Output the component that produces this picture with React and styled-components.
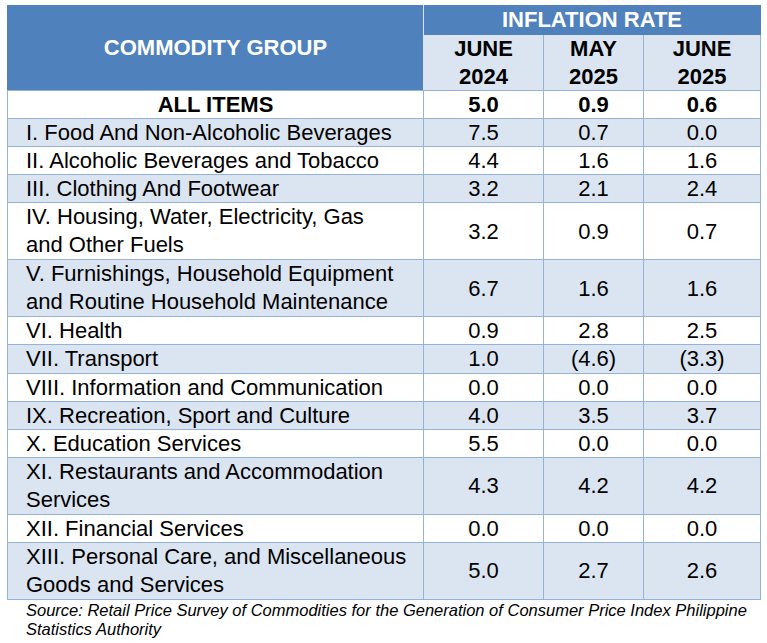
import styled, { createGlobalStyle } from "styled-components";

const GlobalStyle = createGlobalStyle`
  body {
    margin: 0;
    background: #ffffff;
    font-family: "Liberation Sans", Arial, sans-serif;
  }
`;

const rows = [
  { name: ["I. Food And Non-Alcoholic Beverages"], v: ["7.5", "0.7", "0.0"] },
  { name: ["II. Alcoholic Beverages and Tobacco"], v: ["4.4", "1.6", "1.6"] },
  { name: ["III. Clothing And Footwear"], v: ["3.2", "2.1", "2.4"] },
  { name: ["IV. Housing, Water, Electricity, Gas", "and Other Fuels"], v: ["3.2", "0.9", "0.7"] },
  { name: ["V. Furnishings, Household Equipment", "and Routine Household Maintenance"], v: ["6.7", "1.6", "1.6"] },
  { name: ["VI. Health"], v: ["0.9", "2.8", "2.5"] },
  { name: ["VII. Transport"], v: ["1.0", "(4.6)", "(3.3)"] },
  { name: ["VIII. Information and Communication"], v: ["0.0", "0.0", "0.0"] },
  { name: ["IX. Recreation, Sport and Culture"], v: ["4.0", "3.5", "3.7"] },
  { name: ["X. Education Services"], v: ["5.5", "0.0", "0.0"] },
  { name: ["XI. Restaurants and Accommodation", "Services"], v: ["4.3", "4.2", "4.2"] },
  { name: ["XII. Financial Services"], v: ["0.0", "0.0", "0.0"] },
  { name: ["XIII. Personal Care, and Miscellaneous", "Goods and Services"], v: ["5.0", "2.7", "2.6"] },
];

const App = () => (
  <Page>
    <GlobalStyle />
    <Table>
      <colgroup>
        <col style={{ width: 416 }} />
        <col style={{ width: 120 }} />
        <col style={{ width: 100 }} />
        <col style={{ width: 117 }} />
      </colgroup>
      <thead>
        <tr>
          <GroupHead rowSpan={2}>COMMODITY GROUP</GroupHead>
          <RateHead colSpan={3}>INFLATION RATE</RateHead>
        </tr>
        <tr>
          <PeriodHead>JUNE<br />2024</PeriodHead>
          <PeriodHead>MAY<br />2025</PeriodHead>
          <PeriodHead>JUNE<br />2025</PeriodHead>
        </tr>
      </thead>
      <tbody>
        <Row>
          <AllCell>ALL ITEMS</AllCell>
          <AllCell>5.0</AllCell>
          <AllCell>0.9</AllCell>
          <AllCell>0.6</AllCell>
        </Row>
        {rows.map((r, i) => (
          <Row key={r.name[0]} $shaded={i % 2 === 0}>
            <NameCell $double={r.name.length > 1}>
              {r.name.map((line) => (
                <div key={line}>{line}</div>
              ))}
            </NameCell>
            {r.v.map((val, j) => (
              <ValueCell key={j}>{val}</ValueCell>
            ))}
          </Row>
        ))}
      </tbody>
    </Table>
    <Source>
      Source: Retail Price Survey of Commodities for the Generation of Consumer Price Index Philippine
      <br />
      Statistics Authority
    </Source>
  </Page>
);

export default App;

const Page = styled.div`
  padding: 5px 7px 0 7px;
  width: 753px;
`;

const Table = styled.table`
  border-collapse: collapse;
  table-layout: fixed;
  width: 753px;
  font-size: 22px;
  color: #000;
`;

const HeadCell = styled.th`
  padding: 0;
  font-weight: bold;
  font-size: 22px;
  text-align: center;
  border: 1px solid #ffffff;
`;

const GroupHead = styled(HeadCell)`
  background: #4f81bd;
  color: #ffffff;
  border-color: #4f81bd #dbe5f1 #95b3d7 #4f81bd;
`;

const RateHead = styled(HeadCell)`
  background: #4f81bd;
  color: #ffffff;
  height: 28px;
  line-height: 28px;
  border-color: #4f81bd #4f81bd #4f81bd #dbe5f1;
`;

const PeriodHead = styled(HeadCell)`
  background: #dbe5f1;
  color: #000;
  line-height: 27.5px;
  height: 55px;
  border-color: #95b3d7;
  border-top-color: #4f81bd;
`;

const Row = styled.tr`
  background: ${(p) => (p.$shaded ? "#dbe5f1" : "#ffffff")};
`;

const Cell = styled.td`
  border: 1px solid #95b3d7;
  padding: 0;
  line-height: 27.1px;
  height: 27.1px;
  white-space: nowrap;
`;

const NameCell = styled(Cell)`
  padding-left: 18px;
  text-align: left;
  line-height: ${(p) => (p.$double ? "28px" : "27.1px")};
`;

const ValueCell = styled(Cell)`
  text-align: center;
`;

const AllCell = styled(Cell)`
  font-weight: bold;
  text-align: center;
`;

const Source = styled.div`
  font-style: italic;
  font-size: 16.5px;
  line-height: 19px;
  padding: 1px 0 0 19px;
  color: #000;
  white-space: nowrap;
`;
